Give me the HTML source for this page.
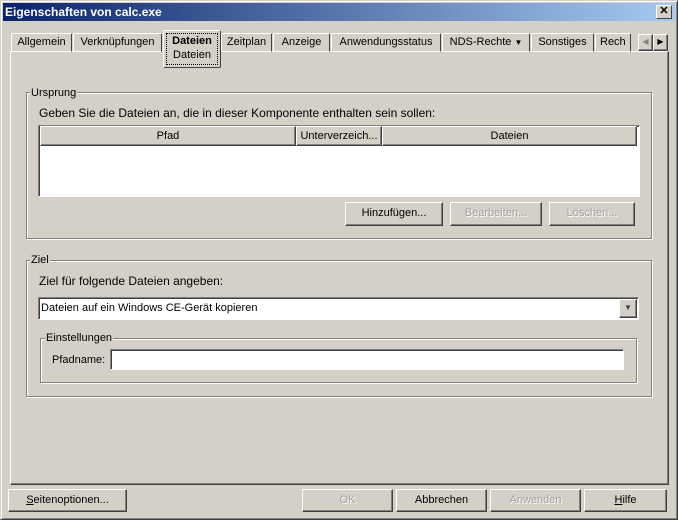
<!DOCTYPE html>
<html><head><style>
*{box-sizing:border-box;margin:0;padding:0}
body{width:678px;height:520px;background:#d4d0c8;font-family:"Liberation Sans",sans-serif;font-size:11px;color:#000;position:relative;overflow:hidden}
.a{position:absolute}
.win{left:0;top:0;width:678px;height:520px;border:1px solid;border-color:#d4d0c8 #404040 #404040 #d4d0c8;box-shadow:inset 1px 1px #fff,inset -1px -1px #808080}
.title{left:3px;top:3px;width:672px;height:18px;background:linear-gradient(90deg,#0a246a,#a6caf0);color:#fff;font-weight:bold;font-size:12px;line-height:18px;padding-left:2px}
.xb{left:656px;top:5px;width:16px;height:14px;background:#d4d0c8;border:1px solid;border-color:#fff #404040 #404040 #fff;font-size:11px;line-height:11px;text-align:center;color:#000;font-weight:bold}
.tab{top:33px;height:19px;border:1px solid;border-color:#fff #404040 transparent #fff;border-radius:2px 2px 0 0;text-align:center;line-height:16px;font-size:11px}
.panel{left:10px;top:51px;width:659px;height:434px;border:1px solid;border-color:#fff #404040 #404040 #fff;box-shadow:inset -1px -1px #808080}
.grp{border:1px solid #808080;box-shadow:1px 1px #fff,inset 1px 1px #fff}
.lbl{background:#d4d0c8;padding:0 1px;font-size:11px;line-height:12px}
.btn{height:24px;border:1px solid;border-color:#fff #404040 #404040 #fff;box-shadow:inset -1px -1px #808080;text-align:center;line-height:21px;font-size:11px;background:#d4d0c8}
.dis{color:#a0a0a0;text-shadow:1px 1px #fff}
.sunk{background:#fff;border:1px solid;border-color:#808080 #fff #fff #808080;box-shadow:inset 1px 1px #404040}
.hd{top:0;height:20px;border:1px solid;border-color:#fff #404040 #404040 #fff;box-shadow:inset -1px -1px #808080;background:#d4d0c8;text-align:center;line-height:18px}
</style></head><body>
<div class="a win"></div>
<div class="a title">Eigenschaften von calc.exe</div>
<div class="a xb">✕</div>

<div class="a panel"></div>
<div class="a tab" style="left:11px;width:61px">Allgemein</div>
<div class="a tab" style="left:73px;width:89px">Verknüpfungen</div>
<div class="a tab" style="left:221px;width:51px">Zeitplan</div>
<div class="a tab" style="left:273px;width:57px">Anzeige</div>
<div class="a tab" style="left:331px;width:110px">Anwendungsstatus</div>
<div class="a tab" style="left:442px;width:88px">NDS-Rechte <span style="font-size:8px">▼</span></div>
<div class="a tab" style="left:531px;width:63px">Sonstiges</div>
<div class="a tab" style="left:595px;width:36px;text-align:left;padding-left:4px;overflow:hidden">Rech</div>
<div class="a" style="left:163px;top:30px;width:58px;height:38px;background:#d4d0c8;border:1px solid;border-color:#fff #404040 #404040 #fff;border-radius:2px"></div>
<div class="a" style="left:166px;top:33px;width:52px;height:32px;border:1px dotted #000;text-align:center;line-height:14px"><b style="font-size:11px">Dateien</b><br>Dateien</div>
<div class="a btn" style="left:638px;top:34px;width:15px;height:17px;line-height:14px;font-size:8px;color:#808080">◀</div>
<div class="a btn" style="left:653px;top:34px;width:15px;height:17px;line-height:14px;font-size:8px">▶</div>

<div class="a grp" style="left:26px;top:92px;width:626px;height:147px"></div>
<div class="a lbl" style="left:30px;top:87px">Ursprung</div>
<div class="a" style="left:39px;top:106px;font-size:12px">Geben Sie die Dateien an, die in dieser Komponente enthalten sein sollen:</div>
<div class="a sunk" style="left:38px;top:125px;width:602px;height:72px">
 <div class="a hd" style="left:1px;width:256px">Pfad</div>
 <div class="a hd" style="left:257px;width:86px">Unterverzeich...</div>
 <div class="a hd" style="left:343px;width:255px">Dateien</div>
</div>
<div class="a btn" style="left:345px;top:202px;width:98px">Hinzufügen...</div>
<div class="a btn dis" style="left:450px;top:202px;width:92px">Bearbeiten...</div>
<div class="a btn dis" style="left:549px;top:202px;width:86px">Löschen...</div>

<div class="a grp" style="left:26px;top:260px;width:626px;height:137px"></div>
<div class="a lbl" style="left:30px;top:254px">Ziel</div>
<div class="a" style="left:39px;top:274px;font-size:12px">Ziel für folgende Dateien angeben:</div>
<div class="a sunk" style="left:38px;top:297px;width:601px;height:23px;padding-left:2px;line-height:21px">Dateien auf ein Windows CE-Gerät kopieren</div>
<div class="a btn" style="left:619px;top:299px;width:18px;height:19px;line-height:16px;font-size:8px;color:#404040">▼</div>
<div class="a grp" style="left:40px;top:338px;width:597px;height:45px"></div>
<div class="a lbl" style="left:45px;top:332px">Einstellungen</div>
<div class="a" style="left:52px;top:354px">Pfadname:</div>
<div class="a sunk" style="left:110px;top:349px;width:514px;height:21px"></div>

<div class="a btn" style="left:8px;top:489px;width:119px;height:23px"><u>S</u>eitenoptionen...</div>
<div class="a btn dis" style="left:302px;top:489px;width:91px;height:23px">OK</div>
<div class="a btn" style="left:396px;top:489px;width:91px;height:23px">Abbrechen</div>
<div class="a btn dis" style="left:490px;top:489px;width:91px;height:23px">Anwenden</div>
<div class="a btn" style="left:584px;top:489px;width:83px;height:23px"><u>H</u>ilfe</div>
</body></html>
